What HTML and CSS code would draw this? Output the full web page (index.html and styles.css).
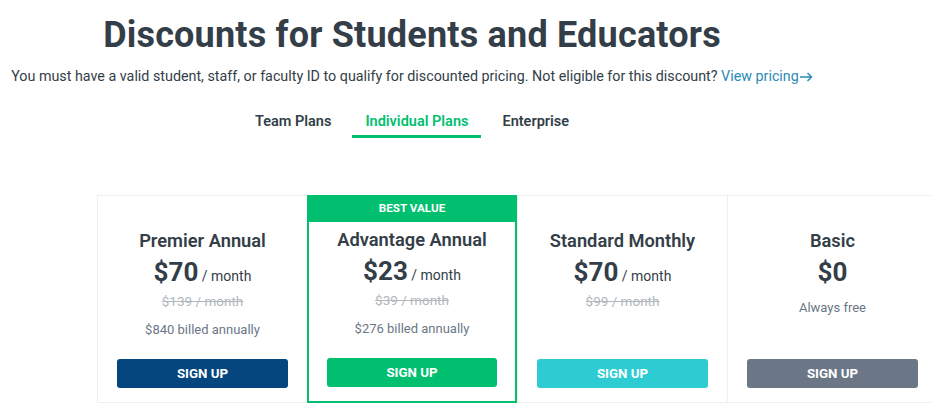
FILE: index.html
```html
<!DOCTYPE html>
<html lang="en">
<head>
    <meta charset="UTF-8">
    <meta name="viewport" content="width=device-width, initial-scale=1.0">
    <title>Discounts for Students and Educators</title>
    <link rel="stylesheet" href="styles.css">
</head>
<body>

    <!-- Intro -->
    <header class="hero">
        <h1 class="hero-title">Discounts for Students and Educators</h1>
        <p class="hero-text">
            You must have a valid student, staff, or faculty ID to qualify for discounted pricing. Not eligible for this discount?
            <a href="#" class="hero-link">View pricing<svg class="arrow" width="13" height="10" viewBox="0 0 13 10"><path d="M0 5h11.5M7.5 1l4 4-4 4" fill="none" stroke="currentColor" stroke-width="1.5"/></svg></a>
        </p>

        <!-- Plan Tabs -->
        <nav class="tabs">
            <a href="#" class="tab">Team Plans</a>
            <a href="#" class="tab active">Individual Plans</a>
            <a href="#" class="tab">Enterprise</a>
        </nav>
    </header>

    <!-- Plan Cards -->
    <section class="plans">
        <div class="plan">
            <div class="plan-flag"></div>
            <h3 class="plan-name">Premier Annual</h3>
            <p class="plan-price"><strong>$70</strong> / month</p>
            <p class="plan-old">$139 / month</p>
            <p class="plan-note">$840 billed annually</p>
            <a href="#" class="btn btn-navy">Sign up</a>
        </div>

        <div class="plan featured">
            <div class="plan-flag">Best value</div>
            <h3 class="plan-name">Advantage Annual</h3>
            <p class="plan-price"><strong>$23</strong> / month</p>
            <p class="plan-old">$39 / month</p>
            <p class="plan-note">$276 billed annually</p>
            <a href="#" class="btn btn-green">Sign up</a>
        </div>

        <div class="plan">
            <div class="plan-flag"></div>
            <h3 class="plan-name">Standard Monthly</h3>
            <p class="plan-price"><strong>$70</strong> / month</p>
            <p class="plan-old">$99 / month</p>
            <a href="#" class="btn btn-teal">Sign up</a>
        </div>

        <div class="plan">
            <div class="plan-flag"></div>
            <h3 class="plan-name">Basic</h3>
            <p class="plan-price"><strong>$0</strong></p>
            <p class="plan-note free">Always free</p>
            <a href="#" class="btn btn-gray">Sign up</a>
        </div>
    </section>

</body>
</html>
```

FILE: styles.css
```css
body {
    margin: 0;
    font-family: Roboto, "Liberation Sans", sans-serif;
    color: #333e48;
    background-color: #ffffff;
    overflow: hidden;
}

/* Intro */
.hero {
    width: 824px;
    text-align: center;
}

.hero-title {
    margin: 0;
    padding-top: 15px;
    font-size: 36px;
    font-weight: 700;
    line-height: 40px;
    letter-spacing: 0.2px;
}

.hero-text {
    margin: 11px 0 0;
    font-size: 14.3px;
    line-height: 20px;
    color: #333e48;
}

.hero-link {
    color: #2a8bb8;
    text-decoration: none;
}

.hero-link .arrow {
    margin-left: 1px;
    vertical-align: -1px;
}

/* Tabs */
.tabs {
    display: flex;
    justify-content: center;
    gap: 8px;
    margin-top: 20px;
}

.tab {
    padding: 7px 13px 5px;
    font-size: 14.5px;
    font-weight: 600;
    color: #333e48;
    text-decoration: none;
    border-bottom: 3px solid transparent;
}

.tab.active {
    color: #00bf6f;
    border-bottom-color: #00bf6f;
}

/* Plan Cards */
.plans {
    display: grid;
    grid-template-columns: repeat(4, 210px);
    margin: 57px 0 0 97px;
    border-top: 1px solid #edeeee;
}

.plan {
    box-sizing: border-box;
    display: flex;
    flex-direction: column;
    align-items: center;
    height: 207px;
    padding: 0 19px 14px;
    text-align: center;
    border-left: 1px solid #edeeee;
    border-bottom: 1px solid #edeeee;
}

.plan-flag {
    align-self: stretch;
    height: 26px;
    margin: 0 -19px;
}

.plan-name {
    margin: 8px 0 0;
    font-size: 18.3px;
    font-weight: 600;
    line-height: 22px;
}

.plan-price {
    margin: 5px 0 0;
    font-size: 14px;
    line-height: 30px;
}

.plan-price strong {
    font-size: 26px;
    font-weight: 700;
}

.plan-old {
    margin: 0;
    font-size: 13.5px;
    line-height: 20px;
    color: #b0b7bd;
    text-decoration: line-through;
}

.plan-note {
    margin: 9px 0 0;
    font-size: 13px;
    line-height: 20px;
    color: #6b7787;
}

.plan-note.free {
    margin-top: 7px;
}

.btn {
    display: block;
    align-self: stretch;
    margin-top: auto;
    height: 29px;
    line-height: 29px;
    border-radius: 3px;
    font-size: 13.3px;
    font-weight: 700;
    text-transform: uppercase;
    color: #ffffff;
    text-decoration: none;
}

.btn-navy { background-color: #05467e; }
.btn-green { background-color: #00bf6f; }
.btn-teal { background-color: #2dccd3; }
.btn-gray { background-color: #6b7787; }

/* Featured card */
.plan.featured {
    border: 2px solid #00bf6f;
    border-top: 0;
    margin-top: -1px;
    height: 208px;
    padding: 0 18px 14px;
}

.featured .plan-flag {
    margin: 0 -18px;
    background-color: #00bf6f;
    color: #ffffff;
    font-size: 11.7px;
    font-weight: 700;
    line-height: 27px;
    height: 27px;
    text-transform: uppercase;
}

.featured .plan-name {
    margin-top: 7px;
}
```
